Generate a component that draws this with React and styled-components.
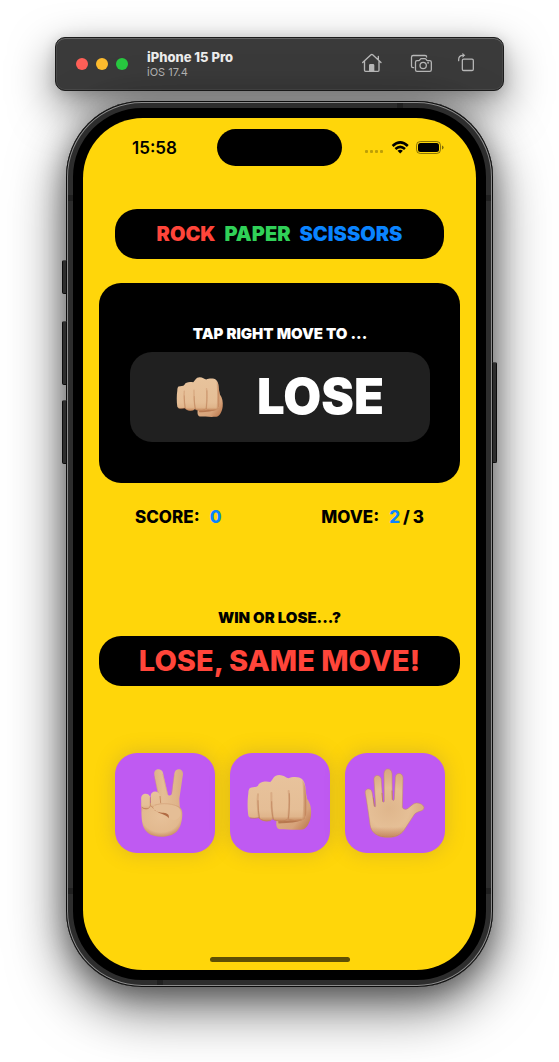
import React from "react";
import styled, { createGlobalStyle } from "styled-components";

const color = {
  yellow: "#ffd60a",
  red: "#ff453a",
  green: "#30d158",
  blue: "#0a84ff",
  purple: "#bf5af2",
};

const GlobalStyle = createGlobalStyle`
  *, *::before, *::after { box-sizing: border-box; }
  body {
    margin: 0;
    background: #fff;
    font-family: Inter, "Liberation Sans", sans-serif;
    color: #000;
  }
  h1, h2, p { margin: 0; }
  button { border: 0; padding: 0; background: none; font: inherit; cursor: pointer; }
  svg { display: block; }
`;

const Stage = styled.main`
  display: flex;
  flex-direction: column;
  gap: 10px;
  max-width: 600px;
  margin: 0 auto;
  padding: 37px 55px 75px;
`;

const Toolbar = styled.header`
  display: flex;
  align-items: center;
  height: 54px;
  padding: 0 23px 0 20px;
  border: 1px solid #1c1c1c;
  border-radius: 10px;
  background: #3a3a3a;
  box-shadow: inset 0 1px 0 #646464, inset 0 0 0 1px #484848,
    0 16px 44px rgba(0, 0, 0, 0.5), 0 2px 14px rgba(0, 0, 0, 0.15);
`;

const Lights = styled.div`
  display: flex;
  gap: 8px;
  margin-right: 19px;
`;

const Light = styled.button`
  width: 12px;
  height: 12px;
  border-radius: 50%;
  background: ${(p) => p.$fill};
`;

const DeviceName = styled.div`
  flex: 1;
`;

const DeviceTitle = styled.h1`
  font-size: 13px;
  line-height: 15px;
  font-weight: 800;
  color: #ececec;
`;

const DeviceOs = styled.p`
  font-size: 11px;
  line-height: 14px;
  color: #b4b4b4;
`;

const Tools = styled.div`
  display: flex;
  gap: 24px;
`;

const ToolButton = styled.button`
  width: 24px;
  height: 24px;
  color: #b8b8b8;
`;

const Phone = styled.div`
  position: relative;
  margin: 0 11px;
  padding: 17px;
  border-radius: 76px;
  background: #000;
  box-shadow: inset 0 0 0 1px #0c0c0c, inset 0 0 0 2px #8c8c8c, inset 0 0 0 7px #2d2d2d,
    0 20px 56px rgba(0, 0, 0, 0.6), 0 6px 28px rgba(0, 0, 0, 0.35);
`;

const SideKey = styled.span`
  position: absolute;
  ${(p) => p.$side}: -4px;
  top: ${(p) => p.$top}px;
  width: 5px;
  height: ${(p) => p.$length}px;
  border: 1px solid #0c0c0c;
  border-top-color: #4c4c4c;
  border-radius: ${(p) => (p.$side === "left" ? "2px 0 0 2px" : "0 2px 2px 0")};
  background: #2d2d2d;
`;

const Band = styled.span`
  position: absolute;
  background: #202020;
  width: ${(p) => (p.$edge === "left" || p.$edge === "right" ? 5 : 6)}px;
  height: ${(p) => (p.$edge === "left" || p.$edge === "right" ? 6 : 5)}px;
  ${(p) => p.$edge}: 2px;
  ${(p) => p.$from}: ${(p) => p.$distance}px;
`;

const Screen = styled.div`
  display: flex;
  flex-direction: column;
  padding: 11px 16px 8px;
  border-radius: 60px;
  background: ${color.yellow};
`;

const StatusBar = styled.div`
  display: grid;
  grid-template-columns: 1fr 125px 1fr;
  align-items: center;
  margin-bottom: 43px;
`;

const Clock = styled.time`
  padding-left: 33px;
  font-size: 17px;
  line-height: 22px;
  font-weight: 600;
`;

const Island = styled.div`
  height: 37px;
  border-radius: 19px;
  background: #000;
`;

const StatusIcons = styled.div`
  display: flex;
  justify-content: flex-end;
  padding-right: 16px;
`;

const Pill = styled.div`
  display: flex;
  align-items: center;
  justify-content: center;
  height: 50px;
  border-radius: 22px;
  background: #000;
`;

const TitlePill = styled(Pill)`
  gap: 9px;
  margin: 0 16px 24px;
  font-size: 20px;
  line-height: 24px;
  font-weight: 900;
`;

const Tint = styled.span`
  color: ${(p) => p.$color};
`;

const Card = styled.section`
  padding: 42px 30px 41px 31px;
  border-radius: 22px;
  background: #000;
  color: #fff;
`;

const Caption = styled.h2`
  font-size: 15px;
  line-height: 18px;
  font-weight: 900;
  text-align: center;
`;

const Prompt = styled.div`
  display: flex;
  align-items: center;
  justify-content: center;
  gap: 33px;
  height: 90px;
  margin-top: 9px;
  border-radius: 22px;
  background: #202020;
  font-size: 49px;
  line-height: 60px;
  font-weight: 900;
`;

const Stats = styled.div`
  display: flex;
  justify-content: space-between;
  margin: 23px 36px 81px;
  font-size: 17px;
  line-height: 22px;
  font-weight: 800;
`;

const Stat = styled.p`
  display: flex;
  gap: 3px;
`;

const StatLabel = styled.span`
  margin-right: 7px;
`;

const ResultPill = styled(Pill)`
  margin: 9px 0 67px;
  color: ${color.red};
  font-size: 29px;
  line-height: 36px;
  font-weight: 800;
`;

const Moves = styled.div`
  display: grid;
  grid-template-columns: repeat(3, 1fr);
  gap: 15px;
  margin: 0 15px 104px 16px;
`;

const MoveButton = styled.button`
  display: flex;
  justify-content: center;
  height: 100px;
  border-radius: 22px;
  background: ${color.purple};
  box-shadow: 0 0 20px rgba(120, 100, 90, 0.28);
`;

const HomeIndicator = styled.div`
  align-self: center;
  width: 140px;
  height: 5px;
  border-radius: 3px;
  background: #5f5004;
`;

function HomeIcon() {
  return (
    <svg width="24" height="24" viewBox="180 81 72 72" fill="none" stroke="currentColor" strokeWidth="4" strokeLinecap="round" strokeLinejoin="round">
      <path d="M188 112.500 213 89.500Q215.500 87.500 218 89.500L243 112.500M235 103V94M193.500 109V136Q193.500 139 196.500 139H234Q237 139 237 136V109" />
      <path d="M209 138V121Q209 119 211 119H219Q221 119 221 121V138Z" fill="currentColor" />
    </svg>
  );
}

function ScreenshotIcon() {
  return (
    <svg width="24" height="24" viewBox="324 81 72 72" fill="none" stroke="currentColor" strokeWidth="3.800" strokeLinecap="round" strokeLinejoin="round">
      <path d="M341 128H339Q334.500 128 334.500 123V96.500Q334.500 91.500 339.500 91.500H375Q380 91.500 380 96" />
      <path d="M351 107H356Q358 107 359.500 104.500L361 102.500Q362 101 364 101H375Q377 101 378 102.500L379.500 104.500Q381 107 383 107H389Q394 107 394 112V134Q394 139 389 139H351Q346.500 139 346.500 134V112Q346.500 107 351 107Z" />
      <circle cx="369.500" cy="121.500" r="9.500" />
      <circle cx="384.500" cy="113.500" r="1" />
    </svg>
  );
}

function RotateIcon() {
  return (
    <svg width="24" height="24" viewBox="468 81 72 72" fill="none" stroke="currentColor" strokeWidth="3.800" strokeLinecap="round" strokeLinejoin="round">
      <rect x="487" y="102.500" width="33" height="34" rx="4" />
      <path d="M476 107V104Q476 91 489 91H492" />
      <path d="M489 86 494 91 489 96Z" fill="currentColor" strokeWidth="2" />
    </svg>
  );
}

function StatusGlyphs() {
  return (
    <svg width="80" height="15" viewBox="0 0 80 15" aria-hidden="true">
      <g fill="#000" opacity="0.25">
        <rect x="1" y="10" width="3" height="3" rx="1" />
        <rect x="6" y="10" width="3" height="3" rx="1" />
        <rect x="11" y="10" width="3" height="3" rx="1" />
        <rect x="16" y="10" width="3" height="3" rx="1" />
      </g>
      <g fill="none" stroke="#000" strokeWidth="2.600">
        <path d="M28.600 6Q36.200-1.200 43.800 6" />
        <path d="M31.400 9Q36.200 4.700 41 9" />
      </g>
      <path d="M33.500 10.800Q36.200 8.800 38.900 10.800L36.200 13.600Z" />
      <rect x="52.500" y="1.500" width="24" height="12" rx="3.800" fill="none" stroke="#000" opacity="0.45" />
      <rect x="54" y="3" width="21" height="9" rx="2.500" />
      <path d="M78 5.500Q79.600 6 79.600 7.500T78 9.500Z" opacity="0.5" />
    </svg>
  );
}

function SkinGradient({ id, vertical }) {
  return (
    <linearGradient id={id} x1="0" y1="0" x2={vertical ? 0 : 1} y2={vertical ? 1 : 0}>
      <stop offset="0" stopColor={vertical ? "#e8c39c" : "#dcb28a"} />
      <stop offset={vertical ? 0.75 : 0.3} stopColor="#e5be96" />
      <stop offset={vertical ? 0.9 : 0.75} stopColor="#e0b58b" />
      <stop offset="1" stopColor={vertical ? "#c5875c" : "#d9ab82"} />
    </linearGradient>
  );
}

function VictoryHand() {
  return (
    <svg width="100" height="100" viewBox="45 39 300 300" aria-hidden="true">
      <defs>
        <SkinGradient id="v-side" />
        <SkinGradient id="v-down" vertical />
        <radialGradient id="v-palm" cx="0.48" cy="0.4" r="0.62">
          <stop offset="0" stopColor="#e7c199" />
          <stop offset="0.75" stopColor="#e2b98f" />
          <stop offset="1" stopColor="#c98d62" />
        </radialGradient>
      </defs>
      <path d="M163 104C160 84 186 83 189 99L204 164C208 169 214 167 216 160L223 101C225 83 250 84 249 103L238 176 240 212 176 216 177 180Z" fill="url(#v-side)" />
      <path d="M188 101 203 164M162 108 178 170M223 104 214 162" fill="none" stroke="#cd9870" strokeWidth="2" opacity="0.6" />
      <path d="M124 188C124 238 124 262 144 279 164 295 210 294 229 276 242 264 247 242 247 220 247 205 239 199 225 194L176 190Z" fill="url(#v-palm)" />
      <path d="M152 168C152 150 178 150 180 168L182 192C181 205 154 207 153 192Z" fill="url(#v-down)" />
      <path d="M123.500 177C122 156 150 157 151 174V194C150 211 125 210 124 197Z" fill="url(#v-down)" />
      <path d="M151 172V198C147 209 132 209 126 201M153 197Q156 203 164 207M180 168 182 190" fill="none" stroke="#b97850" strokeWidth="2.500" opacity="0.8" />
      <path d="M161 199C168 191 185 191 205 192 232 193 244 206 242 222 238 241 216 246 207 233 206 222 190 221 178 217 166 214 157 206 161 199Z" fill="#e5be96" />
      <path d="M162 209C170 217 184 217 195 219 204 221 209 226 206 235 203 228 193 224 178 219Z" fill="#b06a42" />
      <path d="M164 196C182 188 226 189 242 206" fill="none" stroke="#cb956c" strokeWidth="1.500" />
    </svg>
  );
}

function Fist({ name, small }) {
  const frame = small
    ? { width: 48, height: 42, viewBox: "440 100 198 174" }
    : { width: 100, height: 100, viewBox: "390 39 300 300" };
  return (
    <svg {...frame} aria-hidden="true">
      <defs>
        <SkinGradient id={`${name}-down`} vertical />
        <linearGradient id={`${name}-back`} x1="0" y1="0" x2="1" y2="1">
          <stop offset="0" stopColor="#e0b58b" />
          <stop offset="0.7" stopColor="#d7a37a" />
          <stop offset="1" stopColor="#b77045" />
        </linearGradient>
        <linearGradient id={`${name}-shade`} x1="0" x2="1">
          <stop offset="0" stopColor="#b97349" stopOpacity="0" />
          <stop offset="1" stopColor="#b66f45" stopOpacity="0.8" />
        </linearGradient>
      </defs>
      <path d="M530 238 600 150C614 136 619 158 621 176 632 190 635 209 633 226 631 247 621 263 611 268 600 271 560 269 539 268 527 267 528 248 530 238Z" fill={`url(#${name}-back)`} />
      <path d="M535 247C560 243 592 249 613 232" fill="none" stroke="#a65f38" strokeWidth="7" opacity="0.65" />
      <path d="M450 144C459 140 470 142 474 137 479 123 499 123 511 126 519 119 521 105 538 105 550 105 557 112 565 115 577 109 598 109 606 117 619 131 616 150 619 176V218C618 234 612 242 598 242 584 244 572 243 565 236 558 246 529 246 518 237 509 246 486 247 476 233 465 235 448 236 445 227 442 207 442 179 445 160 445 151 447 147 450 144Z" fill={`url(#${name}-down)`} />
      <path d="M474 163C471 188 474 211 477 232M514 159C513 190 516 220 519 237M566 153C570 181 566 216 565 235" fill="none" stroke="#c68d64" strokeWidth="6" opacity="0.4" strokeLinecap="round" />
      <path d="M474 182Q474 215 478 234M515 185Q515 221 520 238M568 161Q569 209 565 235" fill="none" stroke="#a8633b" strokeWidth="1.800" opacity="0.7" strokeLinecap="round" />
      <path d="M605 118C619 132 616 158 619 176V218C618 232 612 238 605 241 612 205 611 158 605 118Z" fill={`url(#${name}-shade)`} />
      <path d="M450 234Q465 237 476 233 489 246 512 242M522 240Q548 247 563 238 583 245 605 239" fill="none" stroke="#bc7b51" strokeWidth="3" opacity="0.6" />
    </svg>
  );
}

function OpenHand() {
  return (
    <svg width="100" height="100" viewBox="75 39 300 300" aria-hidden="true">
      <defs>
        <radialGradient id="o-palm" gradientUnits="userSpaceOnUse" cx="207" cy="205" r="112">
          <stop offset="0" stopColor="#dfb68c" />
          <stop offset="0.55" stopColor="#e5bf96" />
          <stop offset="0.75" stopColor="#dfb58b" />
          <stop offset="1" stopColor="#d9a981" />
        </radialGradient>
        <linearGradient id="o-low" x1="0" y1="0" x2="0" y2="1">
          <stop offset="0.76" stopColor="#b97049" stopOpacity="0" />
          <stop offset="1" stopColor="#b97049" stopOpacity="0.65" />
        </linearGradient>
      </defs>
      <path d="M136 160C133 144 153 142 156 156L163 199Q166 204 167 197L162 120C160 102 182 102 184 119L188 184Q191 190 193 184L192 101C192 82 215 82 216 101L217 178Q220 186 223 178L226 113C227 95 249 97 249 114L247 202Q249 209 258 208C268 206 277 190 289 189 304 188 316 200 311 207 307 214 292 214 284 222L257 263C247 281 232 292 205 292 174 292 154 280 150 254 146 222 141 188 136 160Z" fill="url(#o-palm)" stroke="#c08a60" strokeWidth="1.500" strokeLinejoin="round" />
      <path d="M136 160 150 254C154 280 174 292 205 292 232 292 247 281 257 263L284 222 289 189 190 200Z" fill="url(#o-low)" />
      <path d="M163 198 160 174M188 184 186 160M217 178 216 153" fill="none" stroke="#b77a51" strokeWidth="2" strokeLinecap="round" />
    </svg>
  );
}

const sideKeys = [
  { side: "left", top: 159, length: 34 },
  { side: "left", top: 220, length: 64 },
  { side: "left", top: 299, length: 64 },
  { side: "right", top: 261, length: 101 },
];

const bands = [
  { edge: "left", from: "top", distance: 94 },
  { edge: "right", from: "top", distance: 94 },
  { edge: "left", from: "bottom", distance: 93 },
  { edge: "right", from: "bottom", distance: 93 },
  { edge: "top", from: "right", distance: 90 },
  { edge: "bottom", from: "left", distance: 91 },
];

export default function App() {
  return (
    <>
      <GlobalStyle />
      <Stage>
        <Toolbar>
          <Lights>
            <Light $fill="#ff5f57" aria-label="Close" />
            <Light $fill="#febc2e" aria-label="Minimise" />
            <Light $fill="#28c840" aria-label="Zoom" />
          </Lights>
          <DeviceName>
            <DeviceTitle>iPhone 15 Pro</DeviceTitle>
            <DeviceOs>iOS 17.4</DeviceOs>
          </DeviceName>
          <Tools>
            <ToolButton aria-label="Home"><HomeIcon /></ToolButton>
            <ToolButton aria-label="Save screen"><ScreenshotIcon /></ToolButton>
            <ToolButton aria-label="Rotate"><RotateIcon /></ToolButton>
          </Tools>
        </Toolbar>

        <Phone>
          {sideKeys.map((k) => (
            <SideKey key={k.side + k.top} $side={k.side} $top={k.top} $length={k.length} />
          ))}
          {bands.map((b) => (
            <Band key={b.edge + b.from} $edge={b.edge} $from={b.from} $distance={b.distance} />
          ))}
          <Screen>
            <StatusBar>
              <Clock>15:58</Clock>
              <Island />
              <StatusIcons><StatusGlyphs /></StatusIcons>
            </StatusBar>

            <TitlePill>
              <Tint $color={color.red}>ROCK</Tint>
              <Tint $color={color.green}>PAPER</Tint>
              <Tint $color={color.blue}>SCISSORS</Tint>
            </TitlePill>

            <Card>
              <Caption>TAP RIGHT MOVE TO ...</Caption>
              <Prompt>
                <Fist name="prompt" small />
                <span>LOSE</span>
              </Prompt>
            </Card>

            <Stats>
              <Stat>
                <StatLabel>SCORE:</StatLabel>
                <Tint $color={color.blue}>0</Tint>
              </Stat>
              <Stat>
                <StatLabel>MOVE:</StatLabel>
                <Tint $color={color.blue}>2</Tint>
                <span>/</span>
                <span>3</span>
              </Stat>
            </Stats>

            <Caption>WIN OR LOSE...?</Caption>
            <ResultPill>LOSE, SAME MOVE!</ResultPill>

            <Moves>
              <MoveButton aria-label="Scissors"><VictoryHand /></MoveButton>
              <MoveButton aria-label="Rock"><Fist name="rock" /></MoveButton>
              <MoveButton aria-label="Paper"><OpenHand /></MoveButton>
            </Moves>
            <HomeIndicator />
          </Screen>
        </Phone>
      </Stage>
    </>
  );
}
